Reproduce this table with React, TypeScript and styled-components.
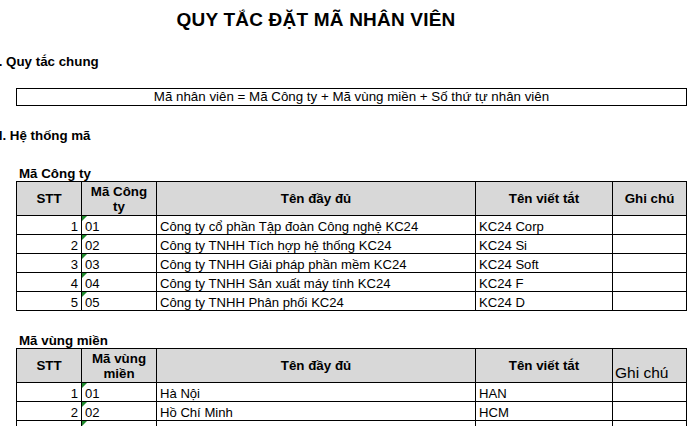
import React from "react";
import styled, { createGlobalStyle, css } from "styled-components";

const Global = createGlobalStyle`
  html, body { margin: 0; padding: 0; background: #fff; }
  body { font-family: "Liberation Sans", Arial, sans-serif; color: #000; }
`;

const Page = styled.div`
  width: 693px;
  height: 426px;
  overflow: hidden;
  display: flex;
  flex-direction: column;
  align-items: flex-start;
`;

const Title = styled.h1`
  margin: 0 0 0 16px;
  padding-top: 9px;
  width: 600px;
  height: 22px;
  box-sizing: content-box;
  font-size: 19px;
  line-height: 22px;
  font-weight: 700;
  letter-spacing: 0.2px;
  text-align: center;
  white-space: nowrap;
`;

const SectionHeading = styled.h2<{ $top: number }>`
  margin: ${(p) => p.$top}px 0 0 -5px;
  font-size: 13.33px;
  line-height: 16px;
  height: 16px;
  font-weight: 700;
  white-space: nowrap;
`;

const RuleBox = styled.div`
  margin: 18px 0 0 16px;
  width: 671px;
  height: 20px;
  box-sizing: border-box;
  border: 1px solid #000;
  font-size: 13.33px;
  line-height: 16px;
  text-align: center;
  white-space: nowrap;
`;

const TableLabel = styled.div<{ $top: number }>`
  margin: ${(p) => p.$top}px 0 0 19px;
  font-size: 13.33px;
  line-height: 15px;
  height: 15px;
  font-weight: 700;
  white-space: nowrap;
`;

const Sheet = styled.div`
  margin-left: 16px;
  display: grid;
  grid-template-columns: 64px 74px 318px 136px 73px;
  grid-template-rows: 33px;
  grid-auto-rows: 18px;
  gap: 1px;
  background: #000;
  border: 1px solid #000;
  flex-shrink: 0;
`;

type Align = "left" | "center" | "right";

const Cell = styled.div<{ $align?: Align; $code?: boolean }>`
  position: relative;
  background: #fff;
  font-size: 13.1px;
  line-height: 15px;
  padding: 3px 3px 0 3px;
  text-align: ${(p) => p.$align ?? "left"};
  white-space: nowrap;
  overflow: hidden;
  ${(p) =>
    p.$code &&
    css`
      &::before {
        content: "";
        position: absolute;
        left: 0;
        top: 0;
        width: 0;
        height: 0;
        border-top: 5px solid #1f8a2c;
        border-right: 5px solid transparent;
      }
    `}
`;

const HeadCell = styled.div<{ $plain?: boolean }>`
  background: #d8d8d8;
  display: flex;
  align-items: ${(p) => (p.$plain ? "flex-end" : "center")};
  justify-content: ${(p) => (p.$plain ? "flex-start" : "center")};
  text-align: ${(p) => (p.$plain ? "left" : "center")};
  padding: ${(p) => (p.$plain ? "0 2px 2px 2px" : "0 3px")};
  font-size: ${(p) => (p.$plain ? "15.5px" : "13.33px")};
  line-height: 15px;
  font-weight: ${(p) => (p.$plain ? 400 : 700)};
`;

type Row = [string, string, string, string, string];

const companies: Row[] = [
  ["1", "01", "Công ty cổ phần Tập đoàn Công nghệ KC24", "KC24 Corp", ""],
  ["2", "02", "Công ty TNHH Tích hợp hệ thống KC24", "KC24 Si", ""],
  ["3", "03", "Công ty TNHH Giải pháp phần mềm KC24", "KC24 Soft", ""],
  ["4", "04", "Công ty TNHH Sản xuất máy tính KC24", "KC24 F", ""],
  ["5", "05", "Công ty TNHH Phân phối KC24", "KC24 D", ""],
];

const regions: Row[] = [
  ["1", "01", "Hà Nội", "HAN", ""],
  ["2", "02", "Hồ Chí Minh", "HCM", ""],
  ["3", "03", "", "", ""],
];

function CodeTable({
  codeTitle,
  rows,
  plainNote,
}: {
  codeTitle: string;
  rows: Row[];
  plainNote?: boolean;
}) {
  return (
    <Sheet>
      <HeadCell>STT</HeadCell>
      <HeadCell>{codeTitle}</HeadCell>
      <HeadCell>Tên đầy đủ</HeadCell>
      <HeadCell>Tên viết tắt</HeadCell>
      <HeadCell $plain={plainNote}>Ghi chú</HeadCell>
      {rows.map((r) => (
        <React.Fragment key={r[0]}>
          <Cell $align="right">{r[0]}</Cell>
          <Cell $code>{r[1]}</Cell>
          <Cell>{r[2]}</Cell>
          <Cell>{r[3]}</Cell>
          <Cell>{r[4]}</Cell>
        </React.Fragment>
      ))}
    </Sheet>
  );
}

export default function App() {
  return (
    <>
      <Global />
      <Page>
        <Title>QUY TẮC ĐẶT MÃ NHÂN VIÊN</Title>
        <SectionHeading $top={23}>I. Quy tắc chung</SectionHeading>
        <RuleBox>Mã nhân viên = Mã Công ty + Mã vùng miền + Số thứ tự nhân viên</RuleBox>
        <SectionHeading $top={22}>II. Hệ thống mã</SectionHeading>
        <TableLabel $top={22}>Mã Công ty</TableLabel>
        <CodeTable codeTitle="Mã Công ty" rows={companies} />
        <TableLabel $top={22}>Mã vùng miền</TableLabel>
        <CodeTable codeTitle="Mã vùng miền" rows={regions} plainNote />
      </Page>
    </>
  );
}
